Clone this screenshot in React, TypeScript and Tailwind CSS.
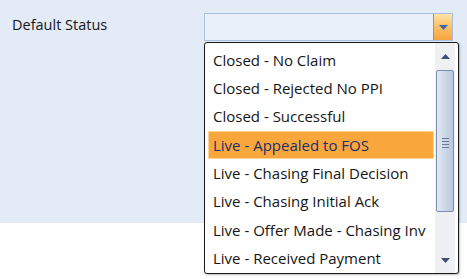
import React from 'react';

const items = [
  'Closed - No Claim',
  'Closed - Rejected No PPI',
  'Closed - Successful',
  'Live - Appealed to FOS',
  'Live - Chasing Final Decision',
  'Live - Chasing Initial Ack',
  'Live - Offer Made - Chasing Inv',
  'Live - Received Payment',
];

const selected = 3;

function Arrow({ up, color }: { up?: boolean; color: string }) {
  return (
    <svg width="9" height="5" viewBox="0 0 9 5">
      <path d={up ? 'M0 5 L4.5 0 L9 5 Z' : 'M0 0 L9 0 L4.5 5 Z'} fill={color} />
    </svg>
  );
}

export default function App() {
  return (
    <div
      className="relative h-[279px] w-[467px] overflow-hidden bg-white text-[#161616]"
      style={{ fontFamily: '"Open Sans", "Noto Sans", sans-serif' }}
    >
      <div className="h-[223px] bg-[#e3ebf7] pt-[13px]">
        <div className="flex items-start">
          <div className="w-[204px] pl-[12px] pt-[1px] text-[14.5px] leading-[22px]">Default Status</div>
          <div className="flex h-[28px] w-[249px] border border-[#a9bfdd] bg-[#eaf1fb]">
            <div className="flex-1" />
            <div className="flex w-[19px] items-center justify-center border-l border-[#c48a3c] bg-gradient-to-b from-[#fde4a6] via-[#fbbf62] to-[#f7a43e]">
              <Arrow color="#3f67b1" />
            </div>
          </div>
        </div>
      </div>

      <div className="absolute left-[204px] top-[42px] flex h-[232px] w-[255px] rounded-[3px] border border-[#1a1a1a] bg-white shadow-[1px_1px_2px_rgba(0,0,0,0.25)]">
        <div className="flex flex-1 flex-col pt-[3px] pl-[3px] pr-[1px] text-[15px]">
          {items.map((it, i) => (
            <div
              key={it}
              className={
                i === selected
                  ? 'flex h-[28.3px] items-center whitespace-nowrap border border-[#fcd592] bg-[#f9a73c] pl-[4px] text-[#1f2d6b]'
                  : 'flex h-[28.3px] items-center whitespace-nowrap border border-transparent pl-[4px]'
              }
            >
              {it}
            </div>
          ))}
        </div>
        <div className="mr-[3px] flex w-[20px] shrink-0 flex-col bg-[#eef0f3]">
          <div className="flex h-[27px] items-center justify-center">
            <Arrow up color="#3c4f74" />
          </div>
          <div className="mx-[1px] flex h-[142px] items-center justify-center rounded-[2px] border border-[#7e8db0] bg-gradient-to-r from-[#e3e9f3] via-[#ccd7e8] to-[#b9c7dd]">
            <div className="flex flex-col gap-[2px] pt-[4px]">
              <div className="h-px w-[7px] bg-[#6d7a95]" />
              <div className="h-px w-[7px] bg-[#6d7a95]" />
              <div className="h-px w-[7px] bg-[#6d7a95]" />
              <div className="h-px w-[7px] bg-[#6d7a95]" />
            </div>
          </div>
          <div className="flex flex-1 items-end justify-center pb-[10px]">
            <Arrow color="#3c4f74" />
          </div>
        </div>
      </div>
    </div>
  );
}
